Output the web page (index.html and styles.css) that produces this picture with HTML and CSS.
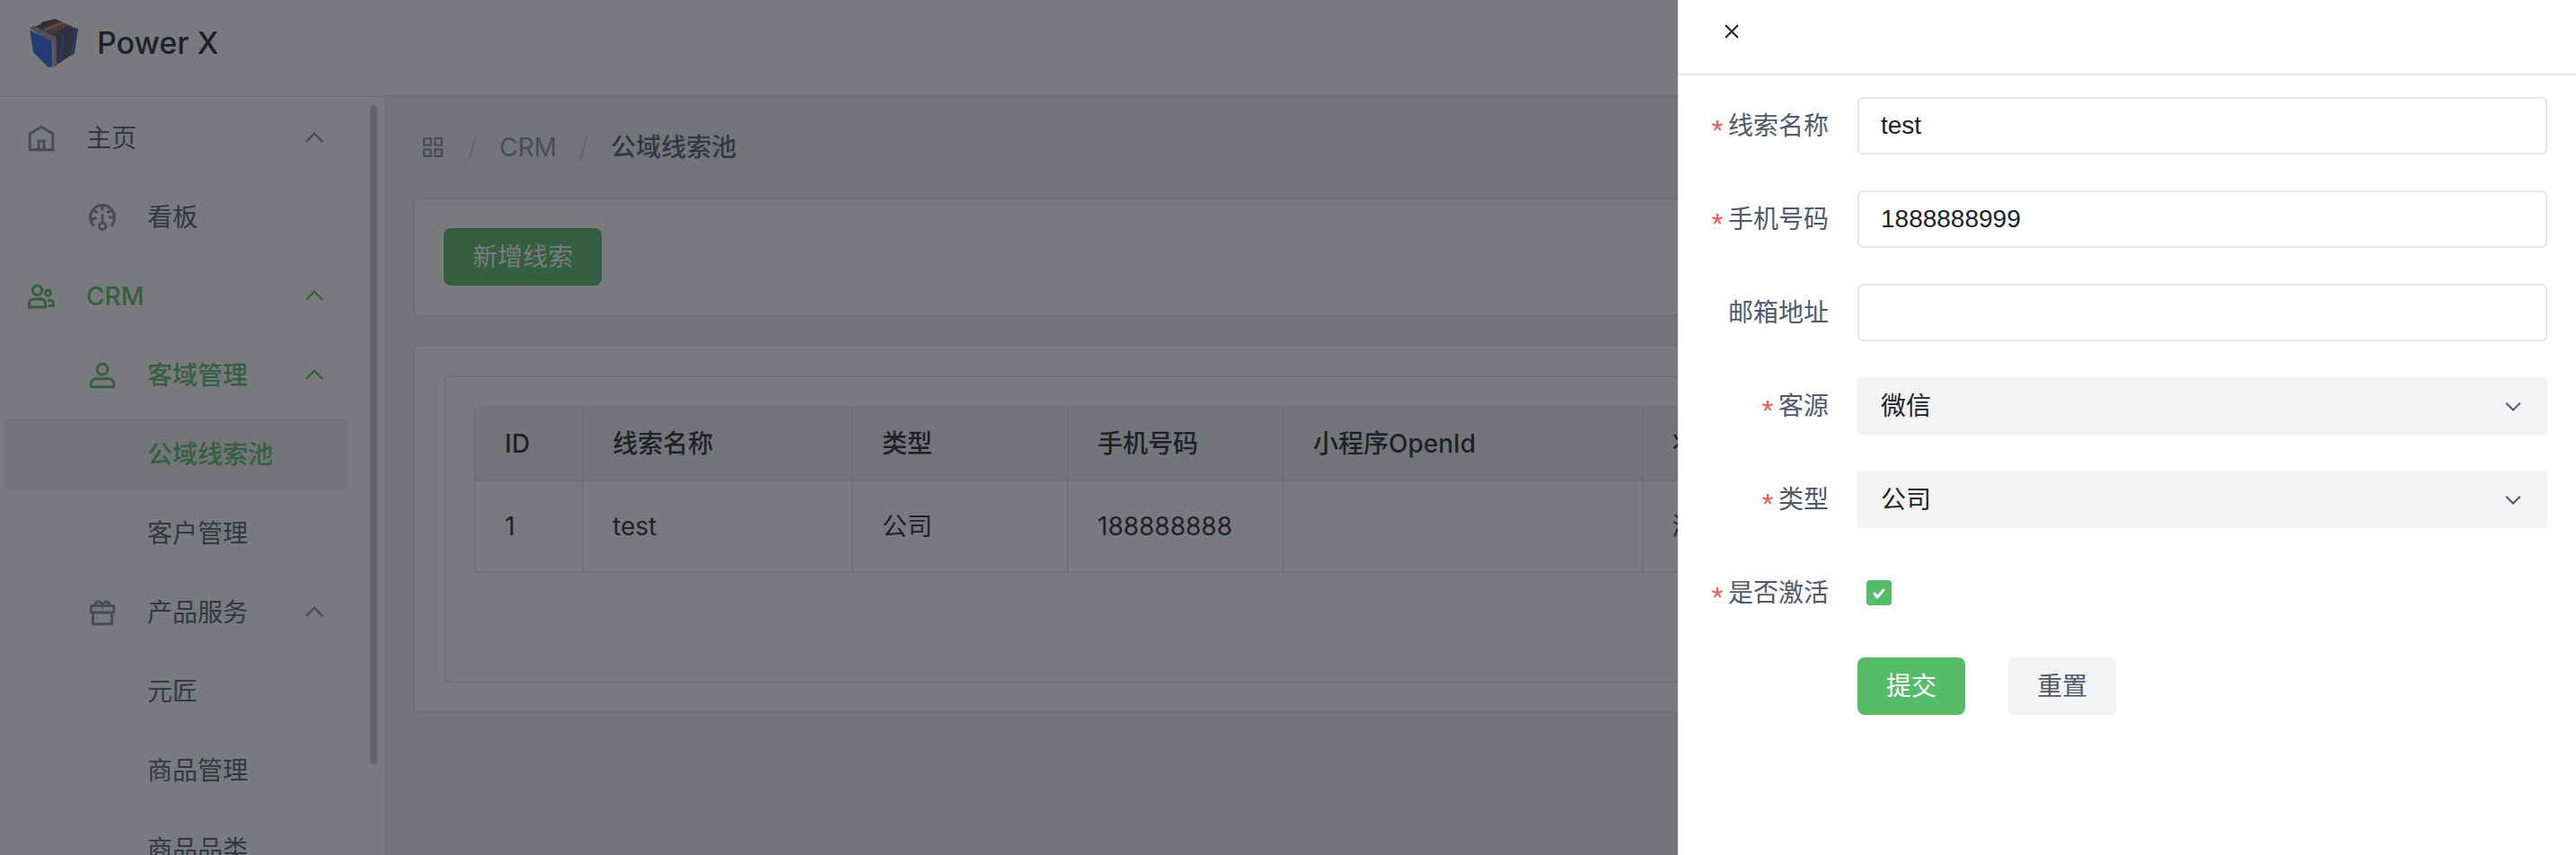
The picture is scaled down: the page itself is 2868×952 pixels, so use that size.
FILE: index.html
```html
<!DOCTYPE html>
<html lang="zh-CN">
<head>
<meta charset="utf-8">
<title>Power X</title>
<link rel="stylesheet" href="styles.css">
</head>
<body>
<svg class="sprite" aria-hidden="true">
  <symbol id="chevron" viewBox="0 0 48 48"><path d="M39.6 17.4 24 33 8.4 17.4"/></symbol>
  <symbol id="star" viewBox="0 0 12 12"><path d="M6 6V0M6 6 .4 4.300M6 6l5.600-1.700M6 6l-3.500 5M6 6l3.500 5"/></symbol>
</svg>
<div class="app">
  <header class="topbar">
    <svg class="logo" viewBox="0 0 54 54" aria-hidden="true">
      <path fill="#54404e" d="M3 11 12 7l3-3 6-1 7-2 9 4 16 7-1 5-23 10z"/>
      <path fill="#8a5a58" d="M14 11 32 4l12 4-19 9z"/>
      <path stroke="#e8b088" stroke-width="2" stroke-dasharray="3 1" d="m17 13 20-8"/>
      <path fill="#9a92ac" d="M1 11 5 8l26 13-1 30-4 2-4-2V24z"/>
      <path fill="#b4b0c0" d="m25 24 3-1-1 29-2 0z"/>
      <path fill="#2f62ea" d="m1 13 23 11 1 28-4 1L5 37z"/>
      <path fill="#51465f" d="m30 21 23-10-4 27-5 3-9 6-5 3z"/>
      <path stroke="#3a66e4" stroke-width="2" d="M31 17q6-1 6 4l-3 27M43 11q7-1 7 4l-4 25"/>
    </svg>
    <h1 class="brand">Power X</h1>
  </header>
  <div class="body">
    <aside class="sider">
      <nav class="menu">
        <a class="item" href="#"><svg class="icon" viewBox="0 0 48 48"><path d="M7 17 24 7l17 10v24H7V17Z"/><path d="M20 28h8v13h-8V28Z"/></svg><span>主页</span><svg class="arrow"><use href="#chevron"/></svg></a>
        <a class="item sub" href="#"><svg class="icon" viewBox="0 0 48 48"><path d="M41.808 24c.118 4.630-1.486 9.333-5.210 13m5.210-13h-8.309m8.309 0c-.112-4.380-1.767-8.694-4.627-12M24 6c5.531 0 10.070 2.404 13.180 6M24 6c-5.724 0-10.384 2.574-13.500 6.380M24 6v7.500M37.180 12 31 17.500m-20.500-5.120L17 17.500m-6.500-5.120C6.990 16.662 5.440 22.508 6.530 28m4.872 9c-2.650-2.609-4.226-5.742-4.873-9m0 0 8.970-3.500M24 32a5 5 0 1 0 0 10 5 5 0 0 0 0-10Zm0 0V19"/></svg><span>看板</span></a>
        <a class="item active" href="#"><svg class="icon" viewBox="0 0 48 48"><circle cx="18" cy="15" r="7"/><circle cx="34" cy="19" r="4"/><path d="M6 34a6 6 0 0 1 6-6h12a6 6 0 0 1 6 6v6H6v-6ZM34 30h4a4 4 0 0 1 4 4v4h-8"/></svg><span>CRM</span><svg class="arrow"><use href="#chevron"/></svg></a>
        <a class="item sub active" href="#"><svg class="icon" viewBox="0 0 48 48"><path d="M7 37a8 8 0 0 1 8-8h18a8 8 0 0 1 8 8v3a1 1 0 0 1-1 1H8a1 1 0 0 1-1-1v-3Z"/><circle cx="24" cy="15" r="8"/></svg><span>客域管理</span><svg class="arrow"><use href="#chevron"/></svg></a>
        <a class="item leaf active selected" href="#" aria-current="page"><span>公域线索池</span></a>
        <a class="item leaf" href="#"><span>客户管理</span></a>
        <a class="item sub" href="#"><svg class="icon" viewBox="0 0 48 48"><path d="M8 14h32a1 1 0 0 1 1 1v8a1 1 0 0 1-1 1H8a1 1 0 0 1-1-1v-8a1 1 0 0 1 1-1ZM10 24h28v16a1 1 0 0 1-1 1H11a1 1 0 0 1-1-1V24ZM14 14c-2-7 7-9 10 0 3-9 12-7 10 0"/></svg><span>产品服务</span><svg class="arrow"><use href="#chevron"/></svg></a>
        <a class="item leaf" href="#"><span>元匠</span></a>
        <a class="item leaf" href="#"><span>商品管理</span></a>
        <a class="item leaf" href="#"><span>商品品类</span></a>
      </nav>
      <div class="thumb"></div>
    </aside>
    <main class="content">
      <nav class="crumbs" aria-label="breadcrumb">
        <svg class="apps" viewBox="0 0 48 48"><path d="M7 7h13v13H7V7ZM28 7h13v13H28V7ZM7 28h13v13H7V28ZM28 28h13v13H28V28Z"/></svg>
        <span class="slash">/</span><span>CRM</span><span class="slash">/</span><span class="here">公域线索池</span>
      </nav>
      <section class="card"><button class="btn primary" type="button">新增线索</button></section>
      <section class="card">
        <div class="panel">
          <table class="grid">
            <colgroup><col class="c-id"><col class="c-name"><col class="c-type"><col class="c-phone"><col class="c-open"><col></colgroup>
            <thead><tr><th>ID</th><th>线索名称</th><th>类型</th><th>手机号码</th><th>小程序OpenId</th><th>状态</th></tr></thead>
            <tbody><tr><td>1</td><td>test</td><td>公司</td><td>188888888</td><td></td><td>激活</td></tr></tbody>
          </table>
        </div>
      </section>
    </main>
  </div>
</div>
<div class="mask"></div>
<div class="drawer" role="dialog" aria-modal="true">
  <div class="drawer-head">
    <button class="close" type="button" aria-label="关闭"><svg viewBox="0 0 16 16"><path d="m1 1 14 14M15 1 1 15"/></svg></button>
  </div>
  <form class="form">
    <div class="row"><label for="name"><svg class="req"><use href="#star"/></svg>线索名称</label><input class="field" id="name" type="text" value="test"></div>
    <div class="row"><label for="phone"><svg class="req"><use href="#star"/></svg>手机号码</label><input class="field" id="phone" type="text" value="1888888999"></div>
    <div class="row"><label for="mail">邮箱地址</label><input class="field" id="mail" type="text"></div>
    <div class="row"><label for="source"><svg class="req"><use href="#star"/></svg>客源</label><div class="pick"><select id="source"><option>微信</option></select><svg class="caret"><use href="#chevron"/></svg></div></div>
    <div class="row"><label for="type"><svg class="req"><use href="#star"/></svg>类型</label><div class="pick"><select id="type"><option>公司</option></select><svg class="caret"><use href="#chevron"/></svg></div></div>
    <div class="row"><label for="active"><svg class="req"><use href="#star"/></svg>是否激活</label><div class="tick"><input id="active" type="checkbox" checked><svg viewBox="0 0 28 28"><path d="m9 15 3 4 7-8"/></svg></div></div>
    <div class="row"><div class="actions"><button class="btn primary" type="button">提交</button><button class="btn" type="reset">重置</button></div></div>
  </form>
</div>
</body>
</html>
```
FILE: styles.css
```css
:root {
  --green: #56bc69;
  --border: #e5e6eb;
  --fill: #f2f3f5;
  --text-1: #1d2129;
  --text-2: #4e5969;
  --text-3: #86909c;
  --text-4: #c9cdd4;
}
* { box-sizing: border-box; }
body {
  margin: 0;
  height: 100vh;
  overflow: hidden;
  font: 28px/44px Inter, "Noto Sans CJK SC", sans-serif;
  color: var(--text-1);
}
svg { fill: none; stroke: currentColor; stroke-width: 4; flex: none; }
button, input, select { font: inherit; color: inherit; margin: 0; }
.sprite { position: absolute; width: 0; height: 0; }
.app { height: 100vh; display: flex; flex-direction: column; background: #fff; }
.topbar {
  flex: none;
  height: 108px;
  display: flex;
  align-items: center;
  gap: 20px;
  padding: 0 32px 10px;
  border-bottom: 2px solid var(--border);
}
.logo { width: 56px; height: 56px; stroke: none; }
.brand { margin: 0; font-size: 34px; font-weight: 500; }
.body { flex: 1; min-height: 0; display: flex; }
.sider {
  position: relative;
  z-index: 1;
  flex: none;
  width: 428px;
  background: #fff;
  box-shadow: 0 4px 10px rgba(0, 0, 0, .08);
  clip-path: inset(0 -12px 0 0);
}
.menu {
  height: 100%;
  overflow: hidden;
  display: flex;
  flex-direction: column;
  gap: 8px;
  padding: 6px 40px 0 4px;
}
.item {
  flex: none;
  height: 80px;
  display: flex;
  align-items: center;
  gap: 32px;
  padding: 0 24px;
  border-radius: 4px;
  color: var(--text-2);
  text-decoration: none;
}
.sub { padding-left: 92px; }
.leaf { padding-left: 160px; }
.active { color: var(--green); font-weight: 500; }
.selected { background: var(--fill); }
.icon { width: 36px; height: 36px; color: var(--text-3); }
.arrow { width: 28px; height: 28px; margin-left: auto; transform: rotate(180deg); color: var(--text-3); }
.active .icon, .active .arrow { color: inherit; }
.thumb {
  position: absolute;
  top: 9px;
  right: 8px;
  width: 8px;
  height: 87%;
  border-radius: 4px;
  background: var(--text-4);
}
.content {
  flex: 1;
  min-width: 0;
  display: flex;
  flex-direction: column;
  gap: 32px;
  padding: 0 32px;
  background: var(--fill);
}
.crumbs {
  height: 80px;
  display: flex;
  align-items: center;
  gap: 25px;
  padding: 32px 8px 0;
  color: var(--text-3);
}
.apps { width: 28px; height: 28px; }
.slash { color: var(--text-4); }
.here { color: var(--text-2); font-weight: 500; }
.card {
  padding: 32px;
  border: 2px solid var(--border);
  border-radius: 4px;
  background: #fff;
}
.btn {
  height: 64px;
  padding: 0 32px;
  border: 0;
  border-radius: 8px;
  background: var(--fill);
  color: var(--text-2);
}
.card .btn { display: block; }
.btn.primary { background: var(--green); color: #fff; }
.panel {
  padding: 32px 32px 120px;
  border: 2px solid var(--border);
  border-radius: 4px;
  overflow: hidden;
}
.grid {
  width: 100%;
  table-layout: fixed;
  border-collapse: separate;
  border-spacing: 0;
  border-top: 2px solid var(--border);
  border-left: 2px solid var(--border);
  border-top-left-radius: 8px;
}
.c-id { width: 120px; }
.c-name { width: 300px; }
.c-type, .c-phone { width: 240px; }
.c-open { width: 400px; }
.grid th, .grid td {
  padding: 0 32px;
  text-align: left;
  border: solid var(--border);
  border-width: 0 2px 2px 0;
}
.grid th { height: 82px; background: var(--fill); font-weight: 500; }
.grid th:first-child { border-top-left-radius: 6px; }
.grid td { height: 102px; }
.mask { position: fixed; z-index: 10; inset: 0; background: rgba(32, 34, 39, .6); }
.drawer {
  position: fixed;
  z-index: 11;
  inset: 0 0 0 auto;
  width: 1000px;
  max-width: 100%;
  background: #fff;
}
.drawer-head {
  height: 84px;
  display: flex;
  align-items: center;
  padding: 0 52px 12px;
  border-bottom: 2px solid var(--border);
}
.close { display: flex; padding: 0; border: 0; background: none; }
.close svg { width: 16px; height: 16px; stroke-width: 2; }
.form { display: flex; flex-direction: column; gap: 40px; padding: 24px 32px 24px 0; }
.row { display: flex; min-height: 64px; }
label {
  flex: none;
  width: 200px;
  display: flex;
  align-items: center;
  justify-content: flex-end;
  gap: 6px;
  padding-right: 32px;
  color: var(--text-2);
}
.req { width: 12px; height: 12px; color: #ee5a52; stroke-width: 2; overflow: visible; }
#star { overflow: visible; }
.field, .pick { flex: 1; min-width: 0; height: 64px; }
.field {
  padding: 0 24px;
  border: 2px solid var(--border);
  border-radius: 6px;
  background: #fff;
  font-family: "Liberation Sans", "Noto Sans CJK SC", sans-serif;
}
.pick { position: relative; }
.pick select {
  width: 100%;
  height: 100%;
  padding: 0 26px;
  border: 0;
  border-radius: 4px;
  background: var(--fill);
  appearance: none;
}
.caret {
  position: absolute;
  right: 26px;
  top: 20px;
  width: 24px;
  height: 24px;
  color: var(--text-2);
  pointer-events: none;
}
.tick { display: grid; align-items: center; padding-left: 10px; }
.tick > * { grid-area: 1 / 1; width: 28px; height: 28px; }
.tick input { appearance: none; border-radius: 4px; background: var(--green); }
.tick svg { position: relative; color: #fff; stroke-width: 3; stroke-linecap: round; stroke-linejoin: round; pointer-events: none; }
.actions { display: flex; gap: 48px; padding-left: 200px; }
```
